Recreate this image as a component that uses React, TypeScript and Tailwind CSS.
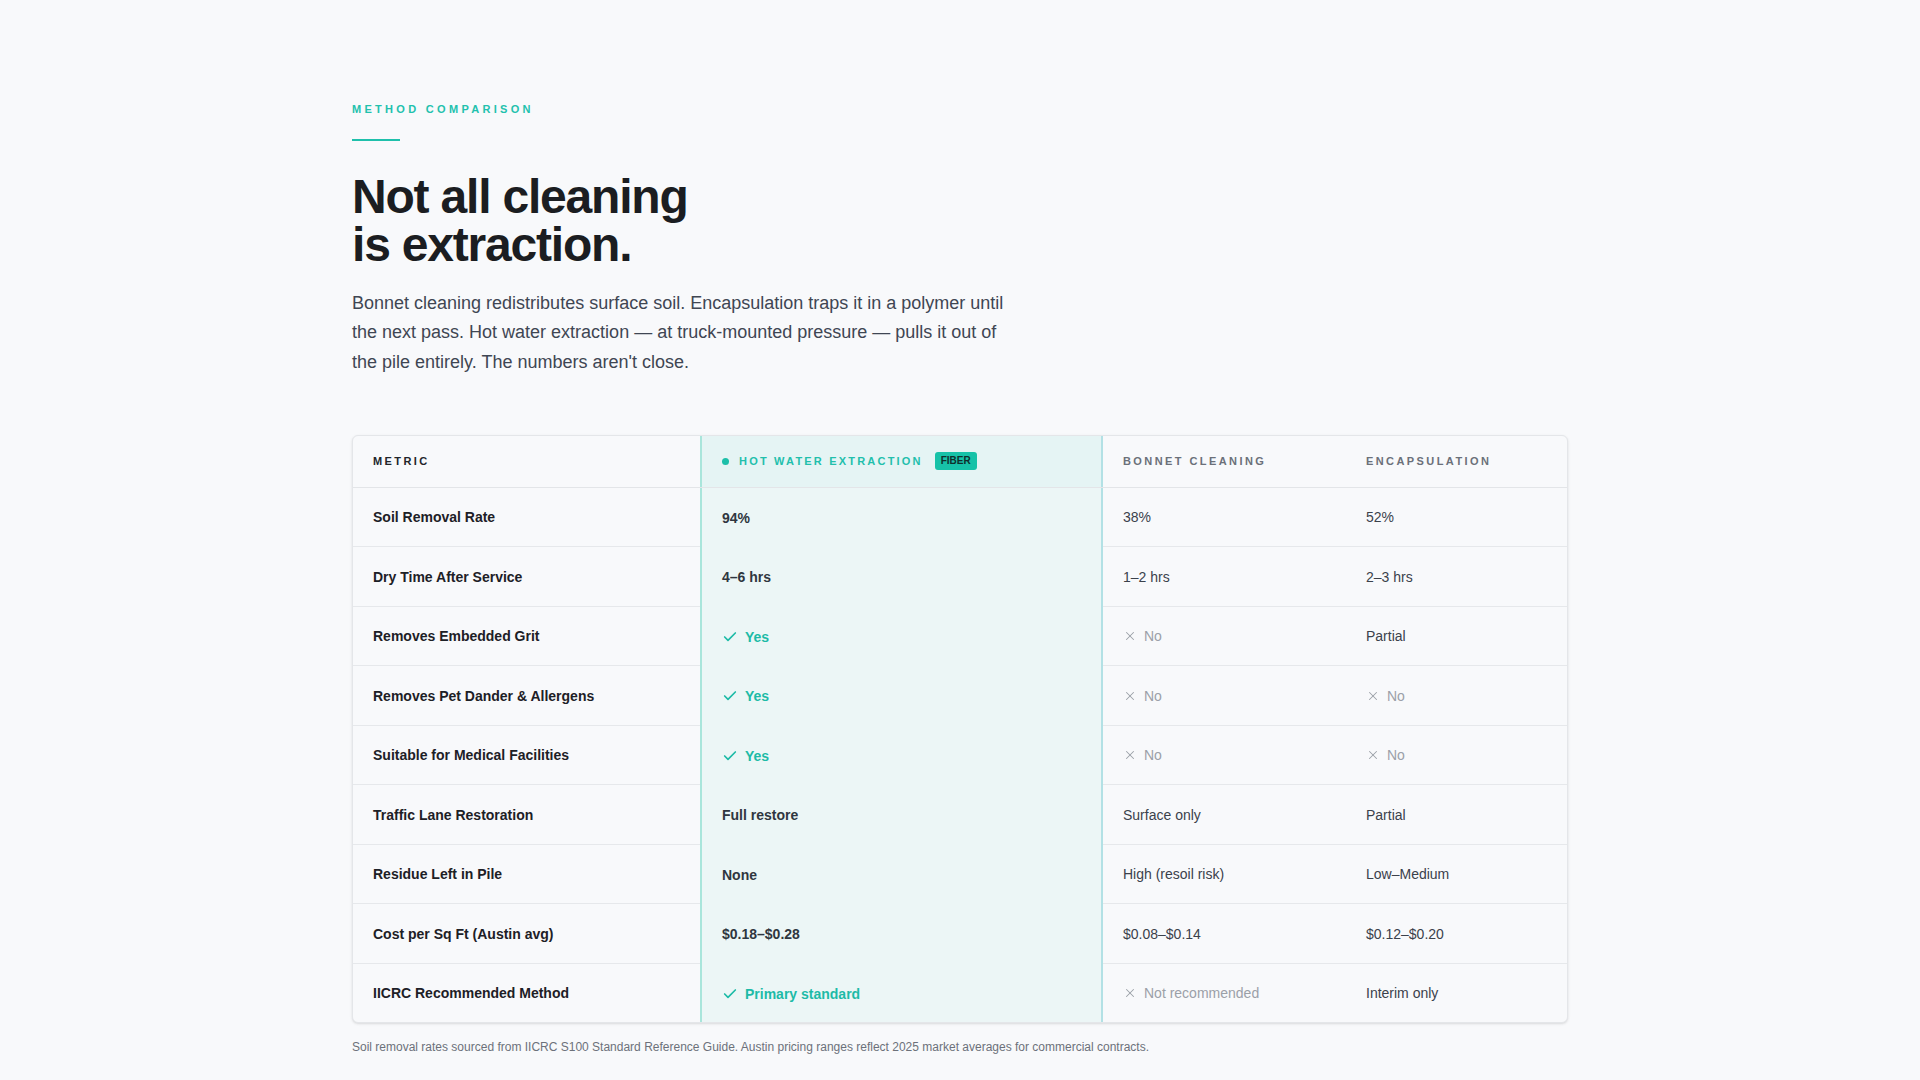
import { FC } from "react";
import { Check, X } from "lucide-react";

type Cell =
  | { kind: "text"; value: string }
  | { kind: "yes"; value: string }
  | { kind: "no"; value: string };

type Row = {
  metric: string;
  hwe: Cell;
  bonnet: Cell;
  encap: Cell;
};

const t = (value: string): Cell => ({ kind: "text", value });
const yes = (value = "Yes"): Cell => ({ kind: "yes", value });
const no = (value = "No"): Cell => ({ kind: "no", value });

const ROWS: Row[] = [
  { metric: "Soil Removal Rate", hwe: t("94%"), bonnet: t("38%"), encap: t("52%") },
  { metric: "Dry Time After Service", hwe: t("4–6 hrs"), bonnet: t("1–2 hrs"), encap: t("2–3 hrs") },
  { metric: "Removes Embedded Grit", hwe: yes(), bonnet: no(), encap: t("Partial") },
  { metric: "Removes Pet Dander & Allergens", hwe: yes(), bonnet: no(), encap: no() },
  { metric: "Suitable for Medical Facilities", hwe: yes(), bonnet: no(), encap: no() },
  { metric: "Traffic Lane Restoration", hwe: t("Full restore"), bonnet: t("Surface only"), encap: t("Partial") },
  { metric: "Residue Left in Pile", hwe: t("None"), bonnet: t("High (resoil risk)"), encap: t("Low–Medium") },
  { metric: "Cost per Sq Ft (Austin avg)", hwe: t("$0.18–$0.28"), bonnet: t("$0.08–$0.14"), encap: t("$0.12–$0.20") },
  { metric: "IICRC Recommended Method", hwe: yes("Primary standard"), bonnet: no("Not recommended"), encap: t("Interim only") },
];

const GRID = "grid grid-cols-[347px_403px_243px_1fr]";
const HEAD_CELL =
  "flex items-center px-5 text-[11px] font-bold uppercase leading-4 tracking-[0.22em]";

const Value: FC<{ cell: Cell; strong?: boolean }> = ({ cell, strong }) => {
  if (cell.kind === "yes") {
    return (
      <span className="inline-flex items-center gap-[7px] font-bold text-[#1dbba7]">
        <Check className="h-4 w-4" strokeWidth={2.5} />
        {cell.value}
      </span>
    );
  }
  if (cell.kind === "no") {
    return (
      <span className="inline-flex items-center gap-[7px] text-[#9ba0a8]">
        <X className="h-3.5 w-3.5" strokeWidth={1.75} />
        {cell.value}
      </span>
    );
  }
  return (
    <span className={strong ? "font-bold text-[#2f3640]" : "text-[#3b414b]"}>
      {cell.value}
    </span>
  );
};

export default function App() {
  return (
    <div className="min-h-screen bg-[#f8f9fb] font-['Liberation_Sans',Arial,sans-serif] text-[#1b1d21]">
      <div className="mx-auto w-[1216px] pt-[101px] pb-10">
        <p className="text-[11px] font-bold uppercase leading-4 tracking-[0.3em] text-[#22c1ad]">
          Method Comparison
        </p>
        <div className="mt-[22px] h-[2px] w-12 bg-[#1fc0ab]" />
        <h1 className="mt-8 text-5xl font-bold leading-none tracking-tight text-[#1b1d21]">
          Not all cleaning
          <br />
          is extraction.
        </h1>
        <p className="mt-5 max-w-2xl text-lg leading-relaxed text-[#3f4653]">
          Bonnet cleaning redistributes surface soil. Encapsulation traps it in a polymer until
          the next pass. Hot water extraction — at truck-mounted pressure — pulls it out of
          the pile entirely. The numbers aren't close.
        </p>

        <div className="mt-[58px] overflow-hidden rounded-md border border-[#e4e6e9] bg-[#f8f9fb] shadow-sm">
          <div className={`${GRID} h-[52px] border-b border-[#e3e5e8]`}>
            <div className={`${HEAD_CELL} text-[#22252a]`}>Metric</div>
            <div className="flex items-center border-x-2 border-l-[#a9e5db] border-r-[#b3e1e5] bg-[#e5f4f4] px-5">
              <span className="mr-2.5 h-[7px] w-[7px] rounded-full bg-[#1dbfa9]" />
              <span className="text-[11px] font-bold uppercase leading-4 tracking-[0.2em] text-[#22bfac]">
                Hot Water Extraction
              </span>
              <span className="ml-3 rounded-[3px] bg-[#17c2a8] px-1.5 text-[10px] font-bold leading-[18px] text-[#0f2f2b]">
                FIBER
              </span>
            </div>
            <div className={`${HEAD_CELL} text-[#6b7079]`}>Bonnet Cleaning</div>
            <div className={`${HEAD_CELL} text-[#6b7079]`}>Encapsulation</div>
          </div>

          {ROWS.map((r, i) => {
            const last = i === ROWS.length - 1;
            return (
              <div key={r.metric}
                className={`${GRID} text-sm leading-5 ${last ? "" : "border-b border-[#e6e8eb]"}`}>
                <div className="flex h-[58.5px] items-center px-5 font-bold text-[#1d2026]">
                  {r.metric}
                </div>
                <div className="-mb-px flex items-center border-x-2 border-l-[#a9e5db] border-r-[#b3e1e5] bg-[#ecf6f6] px-5">
                  <Value cell={r.hwe} strong />
                </div>
                <div className="flex items-center px-5">
                  <Value cell={r.bonnet} />
                </div>
                <div className="flex items-center px-5">
                  <Value cell={r.encap} />
                </div>
              </div>
            );
          })}
        </div>

        <p className="mt-4 text-xs leading-4 text-[#6c717a]">
          Soil removal rates sourced from IICRC S100 Standard Reference Guide. Austin pricing ranges reflect 2025 market averages for commercial contracts.
        </p>
      </div>
    </div>
  );
}
